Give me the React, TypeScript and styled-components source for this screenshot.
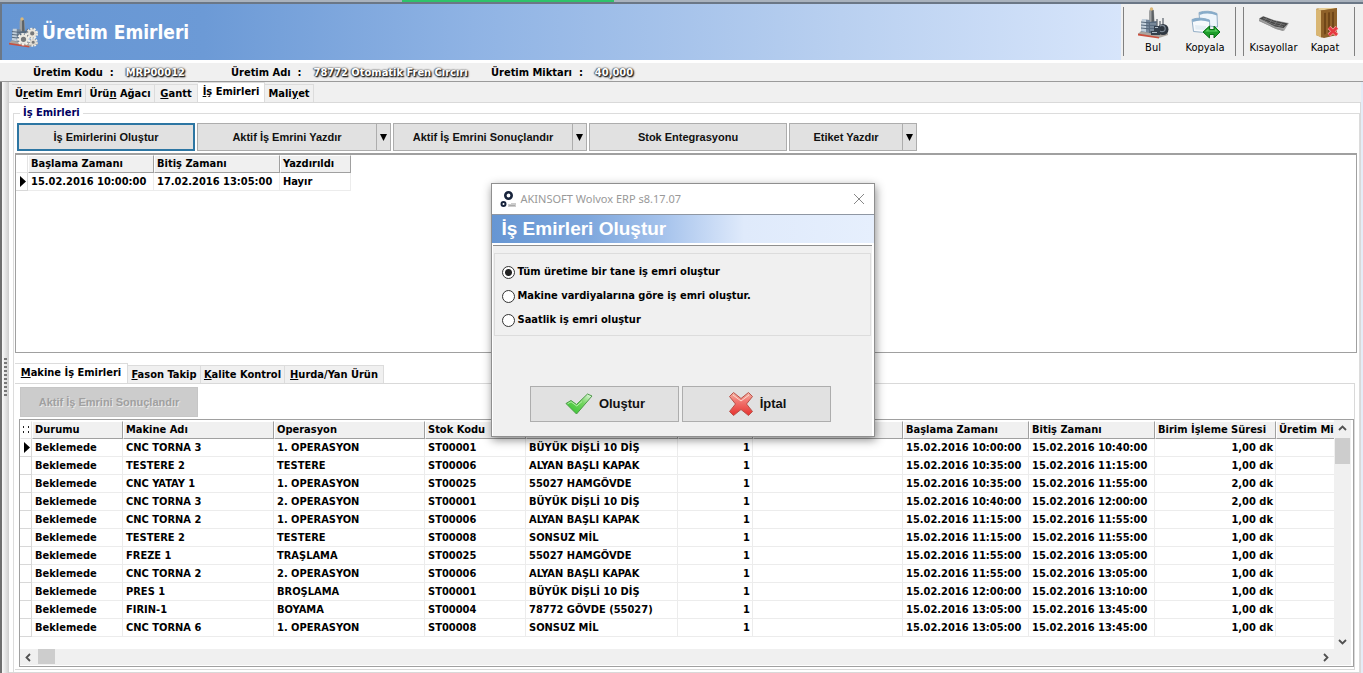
import React, { useState } from "react";
import styled, { createGlobalStyle, css } from "styled-components";

const UI = `"DejaVu Sans Condensed", "Noto Sans", sans-serif`;
const ARIAL = `"Liberation Sans", Arial, sans-serif`;

const GlobalStyle = createGlobalStyle`
  *, *::before, *::after { box-sizing: border-box; }
  body { margin: 0; background: #f0f0f0; color: #000; font: bold 11px/14px ${UI}; }
  button, input { font: inherit; color: inherit; margin: 0; }
  button { border-radius: 0; cursor: default; }
`;

const Page = styled.div`
  position: relative;
  min-height: 100vh;
  display: flex;
  flex-direction: column;
  overflow: hidden;
`;

const TopStrip = styled.div`
  height: 2px;
  flex: none;
  background: linear-gradient(90deg, transparent 402px, #2fc26b 402px, #2fc26b 614px, transparent 614px), #a9b2bd;
`;

const Header = styled.header`
  display: flex;
  height: 58px;
  flex: none;
  border-top: 2px solid #6b7786;
  border-left: 2px solid #6b7786;
`;

const TitleBar = styled.div`
  flex: 1;
  min-width: 0;
  display: flex;
  align-items: center;
  gap: 3px;
  padding-left: 6px;
  background: linear-gradient(90deg, #6696d3 0%, #6c9ad6 18%, #8fb3e4 42%, #b9d0f0 75%, #d7e5fb 100%);
`;

const Title = styled.h1`
  margin: 0;
  color: #fff;
  font-size: 19px;
  line-height: 24px;
`;

const Toolbar = styled.nav`
  display: flex;
  gap: 7px;
  padding: 3px 8px 0 2px;
  background: #f0f0f0;
`;

const ToolGroup = styled.div`
  display: flex;
  height: 49px;
  padding-right: 7px;
  border-left: 1px solid #808080;
  border-right: 1px solid #808080;
`;

const ToolButton = styled.button<{ $width: number }>`
  width: ${(p) => p.$width}px;
  display: flex;
  flex-direction: column;
  align-items: center;
  gap: 2px;
  padding: 0;
  border: 0;
  background: none;
  font-weight: normal;
  font-size: 11px;
  line-height: 14px;
`;

const InfoBar = styled.dl`
  display: flex;
  flex: none;
  height: 22px;
  margin: 0;
  padding: 2px 0 0 33px;
  border-top: 3px solid #fff;
  border-bottom: 1px solid #9b9b9b;
  align-items: center;
`;

const InfoItem = styled.div<{ $width: number }>`
  display: flex;
  gap: 12px;
  width: ${(p) => p.$width}px;
  white-space: nowrap;
`;

const InfoLabel = styled.dt`
  white-space: pre;
`;

const InfoValue = styled.dd`
  margin: 0;
  color: #fff;
  text-shadow: 1px 1px 1px #222, 1px 1px 2px #222, 0 0 2px #444, -1px 0 1px #777;
`;

const Workspace = styled.div`
  flex: 1;
  display: flex;
  padding-right: 2px;
  background: #e4ecf7;
`;

const Splitter = styled.div`
  width: 9px;
  flex: none;
  display: flex;
  align-items: center;
  justify-content: center;
  border-left: 2px solid #6f6f6f;
  border-right: 1px solid #d0d0d0;
  background: linear-gradient(90deg, #fafafa, #d4d4d4);
`;

const Grip = styled.div`
  width: 3px;
  height: 40px;
  background: repeating-linear-gradient(180deg, #777 0 2px, transparent 2px 4px);
`;

const Content = styled.main`
  flex: 1;
  min-width: 0;
  display: flex;
  flex-direction: column;
  background: #f0f0f0;
`;

const Tabs = styled.div<{ $lower?: boolean }>`
  display: flex;
  align-items: flex-end;
  flex: none;
  height: 20px;
  padding-left: ${(p) => (p.$lower ? 0 : 3)}px;
`;

const Tab = styled.button<{ $active: boolean; $width: number }>`
  width: ${(p) => p.$width}px;
  height: ${(p) => (p.$active ? 20 : 18)}px;
  padding: 0 0 ${(p) => (p.$active ? 2 : 0)}px;
  border: 1px solid #dcdcdc;
  border-left-width: 0;
  border-bottom: 0;
  background: ${(p) => (p.$active ? "#fff" : "#f0f0f0")};
  white-space: nowrap;
  text-align: center;
  u { text-underline-offset: 1px; }
`;

const TabPanel = styled.div`
  flex: 1;
  display: flex;
  flex-direction: column;
  padding: 3px 0 0 4px;
  border: 1px solid #d9d9d9;
  border-left: 0;
  background: #fff;
`;

const Group = styled.fieldset`
  flex: 1;
  min-width: 0;
  display: flex;
  flex-direction: column;
  margin: 0;
  padding: 3px 2px 0 1px;
  border: 1px solid #dcdcdc;
  border-bottom: 0;
`;

const Legend = styled.legend`
  margin-left: 5px;
  padding: 0 3px;
  color: #000060;
`;

const ButtonRow = styled.div`
  display: flex;
  flex: none;
  gap: 2px;
  padding: 0 0 1px 2px;
  height: 30px;
`;

const raised = css`
  border: 1px solid #adadad;
  background: #e1e1e1;
`;

const PushButton = styled.button<{ $width: number; $focused?: boolean }>`
  ${raised}
  width: ${(p) => p.$width}px;
  height: 28px;
  padding: 0;
  color: #111;
  font-family: ${ARIAL};
  font-size: 11px;
  ${(p) => p.$focused && css`border: 2px solid #2d76a3;`}
  &:disabled {
    height: 30px;
    border-color: #c6c6c6;
    background: #cccccc;
    color: #a0a0a0;
    text-shadow: 1px 1px 0 #e8e8e8;
  }
`;

const SplitButton = styled.div`
  display: flex;
`;

const DropButton = styled.button`
  ${raised}
  width: 15px;
  height: 28px;
  margin-left: -1px;
  padding: 0;
  display: flex;
  align-items: center;
  justify-content: center;
`;

const UpperGrid = styled.div`
  flex: 1;
  min-height: 120px;
  border: 1px solid #a0a0a0;
  border-top-width: 2px;
`;

const Table = styled.table`
  table-layout: fixed;
  width: 0;
  border-collapse: separate;
  border-spacing: 0;
`;

const HeadCell = styled.th<{ $mark?: boolean }>`
  height: 18px;
  padding: 0 0 0 2px;
  border: 1px solid #a0a0a0;
  border-left-color: #fff;
  border-top-color: #fff;
  background: #f0f0f0;
  text-align: left;
  white-space: nowrap;
  overflow: hidden;
  ${(p) => p.$mark && css`background: #fff; border-color: #fff #e4e4e4 #e4e4e4 #fff; padding: 0; text-align: center;`}
`;

const Cell = styled.td<{ $right?: boolean }>`
  height: 18px;
  padding: 0 2px 0 3px;
  border-right: 1px solid #ececec;
  border-bottom: 1px solid #ececec;
  text-align: ${(p) => (p.$right ? "right" : "left")};
  white-space: nowrap;
  overflow: hidden;
`;

const MarkCell = styled.td`
  padding: 0 0 0 4px;
  border-right: 1px solid #d8d8d8;
  border-bottom: 1px solid #d8d8d8;
  line-height: 0;
`;

const LowerArea = styled.section`
  flex: none;
  margin: 10px 2px 2px 0;
`;

const LowerPanel = styled.div`
  padding: 3px 0 2px 5px;
  border: 1px solid #d9d9d9;
  border-left: 0;
`;

const LowerGrid = styled.div`
  margin: 2px 0 0 -1px;
  border: 1px solid #a0a0a0;
  padding: 0 2px 1px 0;
`;

const GridRow = styled.div`
  display: flex;
`;

const Viewport = styled.div`
  flex: 1;
  min-width: 0;
  height: 229px;
  padding-top: 1px;
  overflow: hidden;
`;

const VScroll = styled.div`
  width: 17px;
  display: flex;
  flex-direction: column;
  background: #f0f0f0;
`;

const HScroll = styled.div`
  display: flex;
  height: 16px;
  padding-right: 17px;
  background: #f0f0f0;
`;

const ScrollButton = styled.button`
  width: 17px;
  height: 16px;
  padding: 0;
  border: 0;
  background: none;
  display: flex;
  align-items: center;
  justify-content: center;
`;

const VThumb = styled.div`
  height: 26px;
  margin: 2px 1px auto;
  background: #cdcdcd;
`;

const HThumb = styled.div`
  width: 17px;
  height: 15px;
  margin: 0 auto 0 1px;
  background: #cdcdcd;
`;

const Overlay = styled.div`
  position: absolute;
  inset: 0;
  display: flex;
  align-items: center;
  justify-content: center;
  padding: 0 0 53px 2px;
`;

const DialogBox = styled.section`
  width: 384px;
  border: 1px solid #8f8f8f;
  background: #fff;
  box-shadow: 1px 3px 9px rgba(0, 0, 0, 0.45);
`;

const Caption = styled.div`
  height: 30px;
  display: flex;
  align-items: center;
  gap: 4px;
  padding: 0 9px 0 8px;
  color: #999;
  font: 11px/16px "Noto Sans", sans-serif;
`;

const CaptionText = styled.span`
  flex: 1;
`;

const CloseButton = styled.button`
  padding: 0;
  border: 0;
  background: none;
  line-height: 0;
`;

const DialogTitle = styled.h2`
  margin: 0;
  padding-left: 10px;
  border-top: 1px solid #8f97a3;
  background: linear-gradient(90deg, #6696d3 0%, #7ea7dd 25%, #a6c3ec 45%, #dfeafb 66%, #e6effd 100%);
  color: #fff;
  font: bold 19px/28px ${ARIAL};
`;

const DialogBody = styled.form`
  margin: 2px 2px 0 1px;
  padding-top: 7px;
  height: 191px;
  border-top: 1px solid #8f8f8f;
  background: #f0f0f0;
`;

const Options = styled.fieldset`
  margin: 0 1px;
  padding: 6px 7px 3px;
  border: 1px solid #dcdcdc;
`;

const Option = styled.label`
  display: flex;
  align-items: center;
  gap: 3px;
  height: 24px;
`;

const Radio = styled.input`
  appearance: none;
  width: 13px;
  height: 13px;
  border: 1px solid #333;
  border-radius: 50%;
  background: #fff;
  &:checked { background: radial-gradient(circle, #222 3px, #fff 4px); }
`;

const DialogActions = styled.div`
  display: flex;
  gap: 3px;
  padding: 50px 0 0 37px;
`;

const ActionButton = styled.button`
  ${raised}
  width: 149px;
  height: 36px;
  display: flex;
  align-items: center;
  justify-content: center;
  gap: 6px;
  padding: 0 0 0 2px;
  color: #111;
  font: bold 13px/18px ${ARIAL};
`;

const FactoryIcon = ({ size, gears }: { size: number; gears?: boolean }) => (
  <svg width={size} height={size} viewBox="0 0 32 32" aria-hidden="true">
    <path d="M1 27 5 23 27 27 31 26 31 28 22 31Z" fill="#aaa59f" />
    <path d="M1 26.500 22 30 22 31.500 1 28.500Z" fill="#c9503f" />
    <path d="M12 5q0-3 2.500-3T17 5l1 17h-6Z" fill="#9fa1a2" />
    <path d="M14.500 3h2l1 17h-3Z" fill="#5e6266" />
    <circle cx="14.500" cy="2" r="1.700" fill="#dcb877" />
    <path d="M5 12 13 13v13l-9-1.500Z" fill="#76889c" />
    <path d="M5 12h4v13l-5-1Z" fill="#c2cfdb" />
    <path d="M4 15l9 1M4 18l9 1M4 21l9 1" stroke="#4c5d70" strokeWidth=".9" />
    <path d="M12 15 20 14v13l-8-1Z" fill="#586a7e" />
    <path d="M13 17h6M13 20h6M13 23h6" stroke="#aab7c4" strokeWidth=".8" />
    <path d="M20 12v9M23 14v8M26 11v10" stroke="#6d747c" strokeWidth="1.400" />
    {gears ? (
      <g fill="#77797b">
        <circle cx="25" cy="17" r="4.500" stroke="#f1eee6" strokeWidth="3" strokeDasharray="2 1.140" />
        <circle cx="25" cy="17" r="3.300" stroke="#e8e4dc" strokeWidth="2.200" />
        <circle cx="16" cy="23" r="5" stroke="#f6f3ec" strokeWidth="3" strokeDasharray="2.200 1.300" />
        <circle cx="16" cy="23" r="3.800" stroke="#ece9e2" strokeWidth="2.200" />
        <circle cx="26" cy="26" r="3.500" stroke="#f1eee6" strokeWidth="2.400" strokeDasharray="1.700 1" />
        <circle cx="26" cy="26" r="2.400" stroke="#dedad2" strokeWidth="1.600" />
      </g>
    ) : (
      <g>
        <circle cx="26" cy="22.500" r="5.500" fill="#2f3740" />
        <circle cx="25" cy="21.500" r="3.200" fill="none" stroke="#7c8894" strokeWidth="1.200" />
        <path d="M17 19h6v5h-6zM14 24h9v4h-9z" fill="#333f4d" />
        <path d="M18 20.500h3M15 25.500h5" stroke="#aebbc8" />
      </g>
    )}
  </svg>
);

const CopyIcon = () => (
  <svg width="32" height="32" viewBox="0 0 32 32" aria-hidden="true">
    <path d="M10 5.500Q19 2.500 28 6.500L28.500 20 11 18Z" fill="#eef5fb" stroke="#93aec6" />
    <path d="M10 5.500Q19 2.500 28 6.500V8.500Q19 5 10.500 8Z" fill="#86abc9" />
    <path d="M3 12.500Q11 9.500 20.500 13L21 26 4.500 24.500Z" fill="#f6f9fc" stroke="#93aec6" />
    <path d="M3 12.500Q11 9.500 20.500 13V15Q12 12 3.500 15Z" fill="#86abc9" />
    <path d="M6 18 17 19v4L6.500 22.500Z" fill="#e4edf4" />
    <path d="M14 25 20.500 19v3.500h4.500V19L31 25 25 31v-3.500h-4.500V31Z" fill="#1d9e2a" stroke="#0b7318" strokeLinejoin="round" />
    <path d="M16 24.500 19.500 21.500v2h6.500v-2l3 3Z" fill="#5fd366" />
  </svg>
);

const KeyboardIcon = () => (
  <svg width="32" height="32" viewBox="0 0 32 32" aria-hidden="true">
    <path d="M1 11.500 5 9 16 13 31 16 26 24 18 22 1 14Z" fill="#a8a8a8" />
    <path d="M1.500 11.500 5.500 9.500 16 13.500 30 16.500 25.500 21 17 19.500Z" fill="#444" />
    <path d="M1 12.500 16 20 25.500 22 25 24 18 22 1 14Z" fill="#949494" />
    <path d="M5 11 17 15.500 27 18M3.500 12.500 16 17.500 25 19.500M9 10.800l-3 3M14 12.500l-3 4M19 14l-3 4.500M24 15.500l-3 4" fill="none" stroke="#888" strokeWidth=".6" />
  </svg>
);

const DoorIcon = () => (
  <svg width="32" height="32" viewBox="0 0 32 32" aria-hidden="true">
    <path d="M7 2 10 1 28 1V28L15 31 7 28Z" fill="#8a5d27" />
    <path d="M7 2 12 3.500V30.500L7 28Z" fill="#d9b673" />
    <path d="M7 2 10 1 28 1 12 3.500Z" fill="#e6cc94" />
    <path d="M12 3.500 28 1.500V28L12 30.500Z" fill="#8f6129" />
    <path d="M15 6 17 5.700V27L15 27.400ZM19 5.500 21 5.200V26.500L19 26.900ZM23 5 25 4.700V25.500L23 26Z" fill="#704618" />
    <path d="M20 20.500 28 28M28 20.500 20 28" stroke="#f6a5a5" strokeWidth="4" />
    <path d="M20 20.500 28 28M28 20.500 20 28" stroke="#e63a40" strokeWidth="2.600" />
  </svg>
);

const AppIcon = () => (
  <svg width="17" height="17" viewBox="0 0 17 17" aria-hidden="true">
    <circle cx="8.500" cy="4.500" r="3.200" fill="#fff" stroke="#18243c" strokeWidth="2.600" />
    <circle cx="3.500" cy="13" r="2" fill="#fff" stroke="#18243c" strokeWidth="2" />
    <path d="M8 13h3v-1h5v4H8Z" fill="#ccc" />
    <path d="M9 14.500h6" stroke="#aaa" />
  </svg>
);

const CheckIcon = () => (
  <svg width="28" height="24" viewBox="0 0 28 24" aria-hidden="true">
    <defs>
      <linearGradient id="green" x1="1" y1="0" x2="0" y2="1">
        <stop offset="0" stopColor="#eef8ec" />
        <stop offset=".4" stopColor="#74d560" />
        <stop offset="1" stopColor="#2cc02a" />
      </linearGradient>
    </defs>
    <path d="M1 11.500 6 8.500 11.500 12.500 22.500 2 27 4 11.500 22Z" fill="url(#green)" stroke="#4c9a47" strokeLinejoin="round" />
    <path d="M2.500 11.800 6 9.800 11.800 14 17 9.500" fill="none" stroke="#b5efa8" />
  </svg>
);

const CrossIcon = () => (
  <svg width="26" height="26" viewBox="0 0 26 26" aria-hidden="true">
    <defs>
      <linearGradient id="red" x1="0" y1="0" x2="0" y2="1">
        <stop offset="0" stopColor="#f3b5a4" />
        <stop offset=".35" stopColor="#f27a74" />
        <stop offset="1" stopColor="#e5322f" />
      </linearGradient>
    </defs>
    <path d="M5.500 1.500 13 7.500 20.500 1.500 24.500 5.500 18.500 13l6 7.500L20.500 24.500 13 18.500 5.500 24.500 1.500 20.500 7.500 13 1.500 5.500Z" fill="url(#red)" stroke="#b8524a" strokeLinejoin="round" />
    <path d="M5 4l8 6L21 4" fill="none" stroke="#fbd9cf" />
  </svg>
);

const CloseIcon = () => (
  <svg width="12" height="12" viewBox="0 0 12 12" aria-hidden="true">
    <path d="M1 1 11 11M11 1 1 11" stroke="#888" />
  </svg>
);

const DownTriangle = () => (
  <svg width="7" height="7" viewBox="0 0 7 7" aria-hidden="true">
    <path d="M0 0h7L3.500 7Z" fill="#000" />
  </svg>
);

const RowMarker = () => (
  <svg width="6" height="11" viewBox="0 0 6 11" aria-hidden="true">
    <path d="M0 0 6 5.500 0 11Z" fill="#000" />
  </svg>
);

const DotsIcon = () => (
  <svg width="8" height="7" viewBox="0 0 8 7" aria-hidden="true">
    <path d="M1 0h1v2H1zM6 0h1v2H6zM1 5h1v2H1zM6 5h1v2H6z" fill="#222" />
  </svg>
);

const chevrons = {
  up: "M1 6 4.500 2.500 8 6",
  down: "M1 3 4.500 6.500 8 3",
  left: "M6 1 2.500 4.500 6 8",
  right: "M3 1 6.500 4.500 3 8",
};

const Chevron = ({ to }: { to: keyof typeof chevrons }) => (
  <svg width="9" height="9" viewBox="0 0 9 9" aria-hidden="true">
    <path d={chevrons[to]} fill="none" stroke="#505050" strokeWidth="1.800" />
  </svg>
);

type TabDef = { before?: string; key: string; after: string; width: number };

const mainTabs: TabDef[] = [
  { before: "Ü", key: "r", after: "etim Emri", width: 74 },
  { before: "Ürü", key: "n", after: " Ağacı", width: 69 },
  { key: "G", after: "antt", width: 43 },
  { key: "İ", after: "ş Emirleri", width: 67 },
  { before: "Mali", key: "y", after: "et", width: 49 },
];

const lowerTabs: TabDef[] = [
  { key: "M", after: "akine İş Emirleri", width: 113 },
  { key: "F", after: "ason Takip", width: 73 },
  { key: "K", after: "alite Kontrol", width: 84 },
  { key: "H", after: "urda/Yan Ürün", width: 99 },
];

const TabStrip = ({ tabs, initial, lower }: { tabs: TabDef[]; initial: number; lower?: boolean }) => {
  const [active, setActive] = useState(initial);
  return (
    <Tabs role="tablist" $lower={lower}>
      {tabs.map((t, i) => (
        <Tab key={i} role="tab" type="button" aria-selected={i === active} $active={i === active} $width={t.width} onClick={() => setActive(i)}>
          {t.before}<u>{t.key}</u>{t.after}
        </Tab>
      ))}
    </Tabs>
  );
};

const columns = [
  { title: "Durumu", width: 91 },
  { title: "Makine Adı", width: 151 },
  { title: "Operasyon", width: 151 },
  { title: "Stok Kodu", width: 101 },
  { title: "", width: 152 },
  { title: "", width: 75, right: true },
  { title: "", width: 150 },
  { title: "Başlama Zamanı", width: 126 },
  { title: "Bitiş Zamanı", width: 126 },
  { title: "Birim İşleme Süresi", width: 121, right: true },
  { title: "Üretim Mi", width: 100 },
];

const day = "15.02.2016 ";
const jobs = [
  ["CNC TORNA 3", "1. OPERASYON", "ST00001", "BÜYÜK DİŞLİ 10 DİŞ", "10:00:00", "10:40:00", "1,00 dk"],
  ["TESTERE 2", "TESTERE", "ST00006", "ALYAN BAŞLI KAPAK", "10:35:00", "11:15:00", "1,00 dk"],
  ["CNC YATAY 1", "1. OPERASYON", "ST00025", "55027 HAMGÖVDE", "10:35:00", "11:55:00", "2,00 dk"],
  ["CNC TORNA 3", "2. OPERASYON", "ST00001", "BÜYÜK DİŞLİ 10 DİŞ", "10:40:00", "12:00:00", "2,00 dk"],
  ["CNC TORNA 2", "1. OPERASYON", "ST00006", "ALYAN BAŞLI KAPAK", "11:15:00", "11:55:00", "1,00 dk"],
  ["TESTERE 2", "TESTERE", "ST00008", "SONSUZ MİL", "11:15:00", "11:55:00", "1,00 dk"],
  ["FREZE 1", "TRAŞLAMA", "ST00025", "55027 HAMGÖVDE", "11:55:00", "13:05:00", "1,00 dk"],
  ["CNC TORNA 2", "2. OPERASYON", "ST00006", "ALYAN BAŞLI KAPAK", "11:55:00", "13:05:00", "1,00 dk"],
  ["PRES 1", "BROŞLAMA", "ST00001", "BÜYÜK DİŞLİ 10 DİŞ", "12:00:00", "13:10:00", "1,00 dk"],
  ["FIRIN-1", "BOYAMA", "ST00004", "78772 GÖVDE (55027)", "13:05:00", "13:45:00", "1,00 dk"],
  ["CNC TORNA 6", "1. OPERASYON", "ST00008", "SONSUZ MİL", "13:05:00", "13:45:00", "1,00 dk"],
];

const options = [
  "Tüm üretime bir tane iş emri oluştur",
  "Makine vardiyalarına göre iş emri oluştur.",
  "Saatlik iş emri oluştur",
];

const DropDown = ({ label, width }: { label: string; width: number }) => (
  <SplitButton>
    <PushButton type="button" $width={width - 14}>{label}</PushButton>
    <DropButton type="button" aria-label={label}><DownTriangle /></DropButton>
  </SplitButton>
);

const OrdersTable = () => (
  <Table>
    <colgroup>
      <col width={12} /><col width={126} /><col width={126} /><col width={71} />
    </colgroup>
    <thead>
      <tr>
        <HeadCell $mark />
        <HeadCell>Başlama Zamanı</HeadCell>
        <HeadCell>Bitiş Zamanı</HeadCell>
        <HeadCell>Yazdırıldı</HeadCell>
      </tr>
    </thead>
    <tbody>
      <tr>
        <MarkCell><RowMarker /></MarkCell>
        <Cell>15.02.2016 10:00:00</Cell>
        <Cell>17.02.2016 13:05:00</Cell>
        <Cell>Hayır</Cell>
      </tr>
    </tbody>
  </Table>
);

const JobsTable = () => (
  <Table>
    <colgroup>
      <col width={12} />
      {columns.map((c, i) => <col key={i} width={c.width} />)}
    </colgroup>
    <thead>
      <tr>
        <HeadCell $mark><DotsIcon /></HeadCell>
        {columns.map((c, i) => <HeadCell key={i}>{c.title}</HeadCell>)}
      </tr>
    </thead>
    <tbody>
      {jobs.map(([machine, op, code, name, start, end, time], r) => (
        <tr key={r}>
          <MarkCell>{r === 0 && <RowMarker />}</MarkCell>
          {["Beklemede", machine, op, code, name, "1", "", day + start, day + end, time, ""].map((v, i) => (
            <Cell key={i} $right={columns[i].right}>{v}</Cell>
          ))}
        </tr>
      ))}
    </tbody>
  </Table>
);

const CreateDialog = () => {
  const [choice, setChoice] = useState(0);
  return (
    <Overlay>
      <DialogBox role="dialog" aria-labelledby="dialog-title">
        <Caption>
          <AppIcon />
          <CaptionText>AKINSOFT Wolvox ERP s8.17.07</CaptionText>
          <CloseButton type="button" aria-label="Kapat"><CloseIcon /></CloseButton>
        </Caption>
        <DialogTitle id="dialog-title">İş Emirleri Oluştur</DialogTitle>
        <DialogBody onSubmit={(e) => e.preventDefault()}>
          <Options>
            {options.map((text, i) => (
              <Option key={text}>
                <Radio type="radio" name="mode" checked={choice === i} onChange={() => setChoice(i)} />
                {text}
              </Option>
            ))}
          </Options>
          <DialogActions>
            <ActionButton type="submit"><CheckIcon />Oluştur</ActionButton>
            <ActionButton type="button"><CrossIcon />İptal</ActionButton>
          </DialogActions>
        </DialogBody>
      </DialogBox>
    </Overlay>
  );
};

export default function App() {
  return (
    <Page>
      <GlobalStyle />
      <TopStrip />
      <Header>
        <TitleBar>
          <FactoryIcon size={31} gears />
          <Title>Üretim Emirleri</Title>
        </TitleBar>
        <Toolbar>
          <ToolGroup>
            <ToolButton type="button" $width={58}><FactoryIcon size={32} />Bul</ToolButton>
            <ToolButton type="button" $width={46}><CopyIcon />Kopyala</ToolButton>
          </ToolGroup>
          <ToolGroup>
            <ToolButton type="button" $width={59}><KeyboardIcon />Kısayollar</ToolButton>
            <ToolButton type="button" $width={44}><DoorIcon />Kapat</ToolButton>
          </ToolGroup>
        </Toolbar>
      </Header>
      <InfoBar>
        <InfoItem $width={198}><InfoLabel>{"Üretim Kodu  :"}</InfoLabel><InfoValue>MRP00012</InfoValue></InfoItem>
        <InfoItem $width={260}><InfoLabel>{"Üretim Adı  :"}</InfoLabel><InfoValue>78772 Otomatik Fren Cırcırı</InfoValue></InfoItem>
        <InfoItem $width={200}><InfoLabel>{"Üretim Miktarı  :"}</InfoLabel><InfoValue>40,000</InfoValue></InfoItem>
      </InfoBar>
      <Workspace>
        <Splitter><Grip /></Splitter>
        <Content>
          <TabStrip tabs={mainTabs} initial={3} />
          <TabPanel>
            <Group>
              <Legend>İş Emirleri</Legend>
              <ButtonRow>
                <PushButton type="button" $width={178} $focused>İş Emirlerini Oluştur</PushButton>
                <DropDown label="Aktif İş Emrini Yazdır" width={194} />
                <DropDown label="Aktif İş Emrini Sonuçlandır" width={194} />
                <PushButton type="button" $width={198}>Stok Entegrasyonu</PushButton>
                <DropDown label="Etiket Yazdır" width={128} />
              </ButtonRow>
              <UpperGrid><OrdersTable /></UpperGrid>
              <LowerArea>
                <TabStrip tabs={lowerTabs} initial={0} lower />
                <LowerPanel>
                  <PushButton type="button" $width={178} disabled>Aktif İş Emrini Sonuçlandır</PushButton>
                  <LowerGrid>
                    <GridRow>
                      <Viewport><JobsTable /></Viewport>
                      <VScroll>
                        <ScrollButton type="button" aria-label="Yukarı"><Chevron to="up" /></ScrollButton>
                        <VThumb />
                        <ScrollButton type="button" aria-label="Aşağı"><Chevron to="down" /></ScrollButton>
                      </VScroll>
                    </GridRow>
                    <HScroll>
                      <ScrollButton type="button" aria-label="Sola"><Chevron to="left" /></ScrollButton>
                      <HThumb />
                      <ScrollButton type="button" aria-label="Sağa"><Chevron to="right" /></ScrollButton>
                    </HScroll>
                  </LowerGrid>
                </LowerPanel>
              </LowerArea>
            </Group>
          </TabPanel>
        </Content>
      </Workspace>
      <CreateDialog />
    </Page>
  );
}
